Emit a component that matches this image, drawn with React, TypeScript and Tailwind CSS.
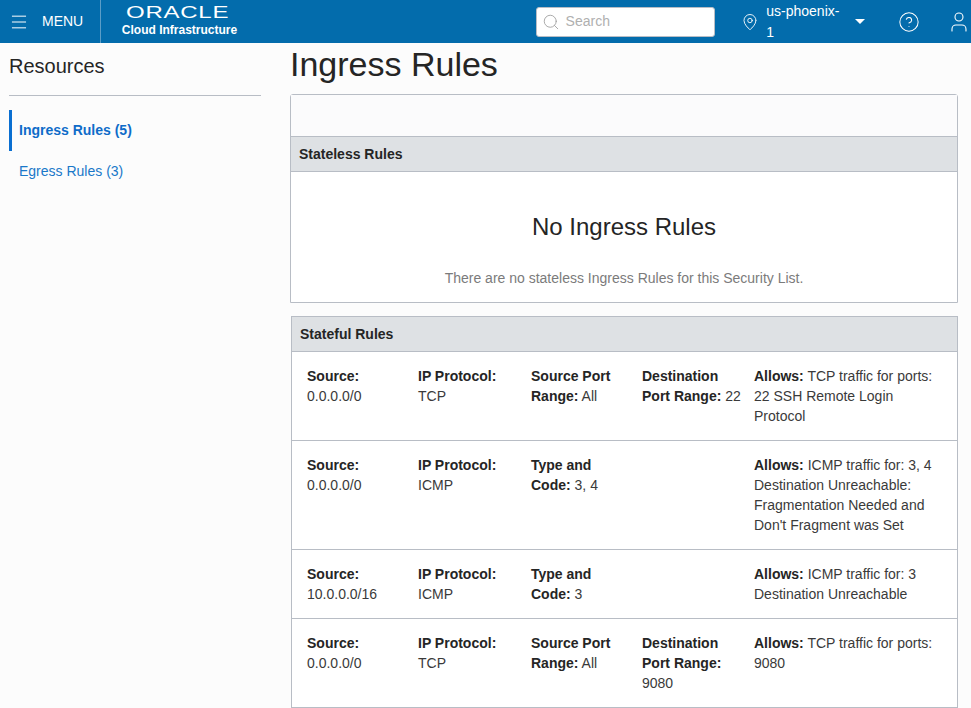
import { Menu, Search, MapPin, CircleHelp, User } from 'lucide-react';

type Rule = {
  source: string;
  protocol: string;
  third: [string, string];
  dest?: string;
  allows: string;
};

const rules: Rule[] = [
  { source: '0.0.0.0/0', protocol: 'TCP', third: ['Source Port Range:', 'All'], dest: '22', allows: 'TCP traffic for ports: 22 SSH Remote Login Protocol' },
  { source: '0.0.0.0/0', protocol: 'ICMP', third: ['Type and Code:', '3, 4'], allows: "ICMP traffic for: 3, 4 Destination Unreachable: Fragmentation Needed and Don't Fragment was Set" },
  { source: '10.0.0.0/16', protocol: 'ICMP', third: ['Type and Code:', '3'], allows: 'ICMP traffic for: 3 Destination Unreachable' },
  { source: '0.0.0.0/0', protocol: 'TCP', third: ['Source Port Range:', 'All'], dest: '9080', allows: 'TCP traffic for ports: 9080' },
];

function RuleRow({ rule }: { rule: Rule }) {
  return (
    <div className="grid grid-cols-[111px_113px_111px_112px_1fr] border-b border-[#b8bdc5] bg-white pl-[15px] pt-[14px] pb-[14px] pr-[15px] text-[14px] leading-[20px] text-[#3a3a3a]">
      <div>
        <b className="block text-[#252525]">Source:</b>
        {rule.source}
      </div>
      <div>
        <b className="block text-[#252525]">IP Protocol:</b>
        {rule.protocol}
      </div>
      <div className="pr-5">
        <b className="text-[#252525]">{rule.third[0]}</b> {rule.third[1]}
      </div>
      <div className="pr-3">
        {rule.dest && (
          <>
            <b className="text-[#252525]">Destination Port Range:</b> {rule.dest}
          </>
        )}
      </div>
      <div>
        <b className="text-[#252525]">Allows:</b> {rule.allows}
      </div>
    </div>
  );
}

export default function App() {
  return (
    <div className="h-[708px] overflow-hidden bg-[#fcfcfc] font-['Liberation_Sans',Arial,sans-serif] text-[#252525]">
      <header className="flex h-[43px] items-center bg-[#036cac] text-white">
        <div className="flex h-full w-[101px] items-center gap-[13px] border-r border-[#5c9dc7] pl-[9px]">
          <Menu size={20} strokeWidth={1.2} />
          <span className="text-[14px]">MENU</span>
        </div>
        <div className="ml-5 flex w-[200px] flex-col">
          <span className="ml-[5px] h-[15px] w-[60px] origin-left scale-x-[1.5] text-[16px] leading-[14px] tracking-[0.5px]">ORACLE</span>
          <span className="ml-px mt-[2px] text-[12px] leading-[14px] font-bold">Cloud Infrastructure</span>
        </div>
        <div className="ml-[215px] flex h-[30px] w-[180px] items-center gap-[6px] rounded-[3px] border border-[#b8bdc5] bg-white pl-[5px] text-[14px] text-[#b0b0b0]">
          <Search size={18} strokeWidth={1.1} className="text-[#9a9a9a]" />
          Search
        </div>
        <div className="ml-[26px] flex items-center text-[14px]">
          <MapPin size={18} strokeWidth={1.2} />
          <span className="ml-[7px]">us-phoenix-1</span>
          <span className="ml-2 h-0 w-0 border-x-[5px] border-t-[5px] border-x-transparent border-t-white" />
        </div>
        <CircleHelp size={22} strokeWidth={1.1} className="ml-[33px]" />
        <User size={24} strokeWidth={1.1} className="ml-[27px]" />
      </header>

      <div className="flex">
        <aside className="ml-[9px] w-[252px]">
          <h2 className="mt-[11px] text-[20px] leading-[24px]">Resources</h2>
          <div className="mt-[17px] border-t border-[#b8bdc5]" />
          <nav className="mt-[14px] text-[14px]">
            <div className="flex h-[41px] items-center border-l-[3px] border-[#0a6fd1] pl-[7px] font-bold text-[#0f6cc9]">Ingress Rules (5)</div>
            <div className="mt-[10px] flex h-[20px] items-center pl-[10px] text-[#1a78c9]">Egress Rules (3)</div>
          </nav>
        </aside>

        <main className="ml-[29px] w-[668px]">
          <h1 className="mt-[1px] text-[34px] leading-[41px]">Ingress Rules</h1>
          <section className="mt-[9px] rounded-t-[3px] border border-[#b8bdc5] bg-white">
            <div className="h-[41px] bg-[#fbfbfc]" />
            <div className="flex h-[36px] items-center border-y border-[#b8bdc5] bg-[#dee1e4] pl-2 text-[14px] font-bold">Stateless Rules</div>
            <div className="flex h-[130px] flex-col items-center text-center">
              <p className="mt-[41px] text-[24px] leading-[28px]">No Ingress Rules</p>
              <p className="mt-[27px] text-[14px] leading-[20px] text-[#7b7b7b]">There are no stateless Ingress Rules for this Security List.</p>
            </div>
          </section>
          <section className="ml-px mt-[13px] border-x border-t border-[#b8bdc5]">
            <div className="flex h-[35px] items-center border-b border-[#b8bdc5] bg-[#dee1e4] pl-2 text-[14px] font-bold">Stateful Rules</div>
            {rules.map((rule, i) => (
              <RuleRow key={i} rule={rule} />
            ))}
          </section>
        </main>
      </div>
    </div>
  );
}
